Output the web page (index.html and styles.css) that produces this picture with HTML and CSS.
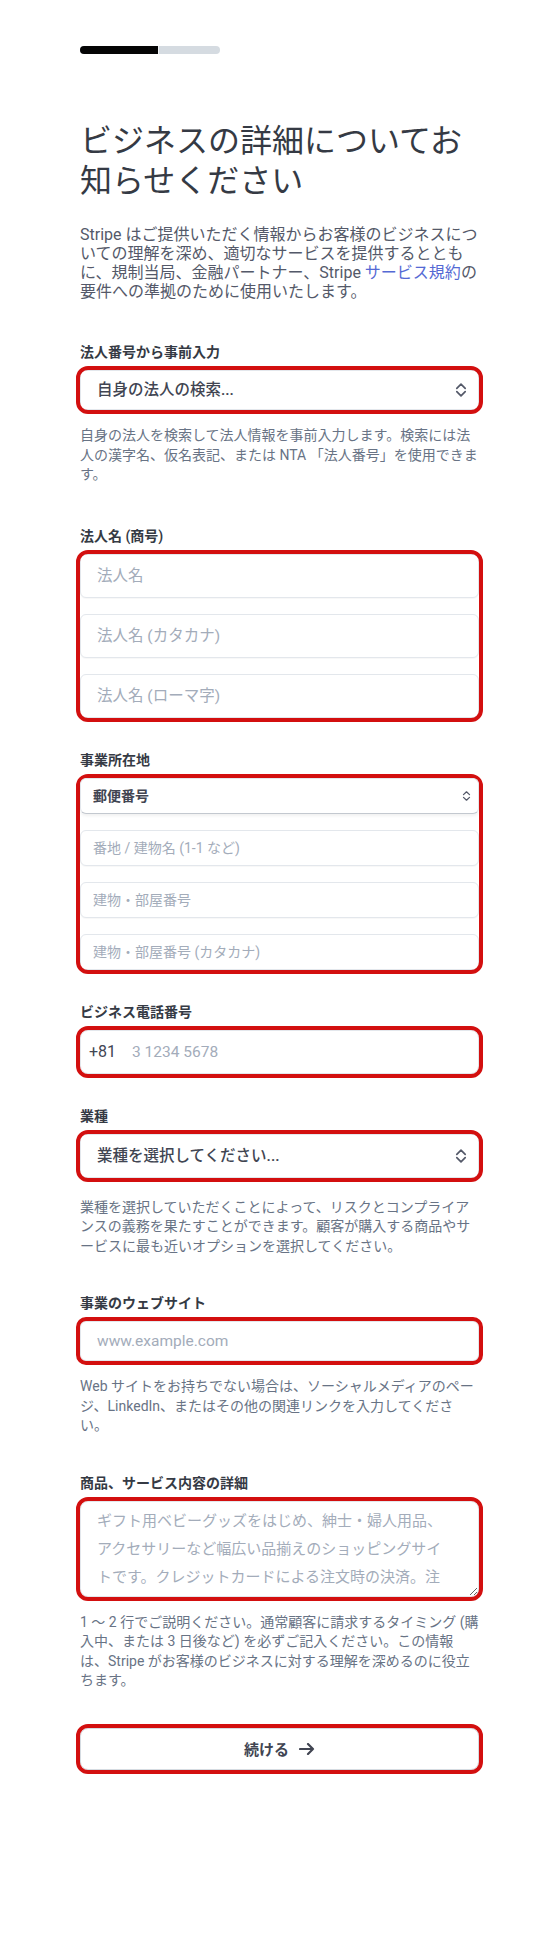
FILE: index.html
```html
<!DOCTYPE html>
<html lang="ja">
<head>
    <meta charset="UTF-8">
    <meta name="viewport" content="width=device-width, initial-scale=1.0">
    <title>ビジネスの詳細</title>
    <link rel="stylesheet" href="styles.css">
</head>
<body>
    <div class="page">
        <div class="progress"><div class="progress-fill"></div></div>

        <h1>ビジネスの詳細についてお知らせください</h1>
        <p class="intro">Stripe はご提供いただく情報からお客様のビジネスについての理解を深め、適切なサービスを提供するとともに、規制当局、金融パートナー、Stripe <a href="#">サービス規約</a>の要件への準拠のために使用いたします。</p>

        <form class="form" onsubmit="return false">
            <div class="field field-lookup">
                <label for="lookup">法人番号から事前入力</label>
                <div class="select-wrap hl">
                    <select id="lookup" class="select">
                        <option>自身の法人の検索...</option>
                    </select>
                    <svg class="chevron" viewBox="0 0 12 16"><path d="M1.8 6.4 6 2.2l4.2 4.2M1.8 9.6 6 13.8l4.2-4.2"/></svg>
                </div>
                <p class="hint">自身の法人を検索して法人情報を事前入力します。検索には法人の漢字名、仮名表記、または NTA 「法人番号」を使用できます。</p>
            </div>

            <div class="field">
                <label for="name">法人名 (商号)</label>
                <div class="stack hl">
                    <input id="name" class="input" type="text" placeholder="法人名">
                    <input class="input" type="text" placeholder="法人名 (カタカナ)">
                    <input class="input" type="text" placeholder="法人名 (ローマ字)">
                </div>
            </div>

            <div class="field">
                <label for="zip">事業所在地</label>
                <div class="stack hl">
                    <div class="select-wrap">
                        <select id="zip" class="select select-small">
                            <option>郵便番号</option>
                        </select>
                        <svg class="chevron chevron-small" viewBox="0 0 12 16"><path d="M2 6.2 6 2.4l4 3.8M2 9.8 6 13.6l4-3.8"/></svg>
                    </div>
                    <input class="input input-small" type="text" placeholder="番地 / 建物名 (1-1 など)">
                    <input class="input input-small" type="text" placeholder="建物・部屋番号">
                    <input class="input input-small" type="text" placeholder="建物・部屋番号 (カタカナ)">
                </div>
            </div>

            <div class="field">
                <label for="phone">ビジネス電話番号</label>
                <div class="phone hl">
                    <span class="phone-code">+81</span>
                    <input id="phone" type="tel" placeholder="3 1234 5678">
                </div>
            </div>

            <div class="field">
                <label for="industry">業種</label>
                <div class="select-wrap hl">
                    <select id="industry" class="select select-tall">
                        <option>業種を選択してください...</option>
                    </select>
                    <svg class="chevron" viewBox="0 0 12 16"><path d="M1.8 6.4 6 2.2l4.2 4.2M1.8 9.6 6 13.8l4.2-4.2"/></svg>
                </div>
                <p class="hint hint-loose">業種を選択していただくことによって、リスクとコンプライアンスの義務を果たすことができます。顧客が購入する商品やサービスに最も近いオプションを選択してください。</p>
            </div>

            <div class="field">
                <label for="website">事業のウェブサイト</label>
                <input id="website" class="input input-single hl" type="text" placeholder="www.example.com">
                <p class="hint">Web サイトをお持ちでない場合は、ソーシャルメディアのページ、LinkedIn、またはその他の関連リンクを入力してください。</p>
            </div>

            <div class="field">
                <label for="description">商品、サービス内容の詳細</label>
                <textarea id="description" class="textarea hl" placeholder="ギフト用ベビーグッズをはじめ、紳士・婦人用品、&#10;アクセサリーなど幅広い品揃えのショッピングサイ&#10;トです。クレジットカードによる注文時の決済。注&#10;文日または翌営業日後に発送いたします。"></textarea>
                <p class="hint">1 〜 2 行でご説明ください。通常顧客に請求するタイミング (購入中、または 3 日後など) を必ずご記入ください。この情報は、Stripe がお客様のビジネスに対する理解を深めるのに役立ちます。</p>
            </div>

            <button type="submit" class="submit hl">
                続ける
                <svg class="arrow" viewBox="0 0 16 12"><path d="M1 6h13M9 1l5 5-5 5"/></svg>
            </button>
        </form>
    </div>
</body>
</html>
```

FILE: styles.css
```css
* {
    box-sizing: border-box;
}
body {
    margin: 0;
    background: #fff;
    font-family: Roboto, "Noto Sans CJK JP", sans-serif;
    color: #353a44;
}
input, select, textarea, button {
    font-family: inherit;
}
.page {
    width: 399px;
    margin-left: 80px;
    padding: 46px 0 160px;
}
.progress {
    width: 140px;
    height: 8px;
    background: #d5dbe1;
    border-radius: 4px;
    overflow: hidden;
}
.progress-fill {
    width: 79px;
    height: 100%;
    background: #050505;
    border-right: 1px solid #f2f4f6;
}
h1 {
    margin: 67px 0 0;
    font-size: 32px;
    line-height: 40px;
    font-weight: 400;
    color: #353a44;
}
.intro {
    margin: 24px 0 0;
    font-size: 16px;
    line-height: 19px;
    color: #545969;
}
.intro a {
    display: inline-block;
    line-height: 19px;
    color: #5469d4;
    text-decoration: none;
}
.form {
    margin-top: 41px;
}
.field + .field {
    margin-top: 32px;
}
.field label {
    display: block;
    font-size: 14px;
    line-height: 20px;
    font-weight: 600;
    color: #353a44;
    margin-bottom: 8px;
}
.hint {
    margin: 16px 0 0;
    padding-bottom: 5px;
    font-size: 14px;
    line-height: 19.5px;
    color: #687385;
}
.field-lookup .hint {
    padding-bottom: 9px;
}
.hint-loose {
    margin-top: 20px;
}

/* red highlight boxes */
.hl {
    outline: 4px solid #d30f0f;
    border-radius: 8px;
}

.stack {
    display: flex;
    flex-direction: column;
    gap: 16px;
}
.input {
    display: block;
    width: 100%;
    height: 44px;
    padding: 0 16px;
    border: 1px solid #e3e7ec;
    border-radius: 6px;
    background: #fff;
    font-size: 15.5px;
    color: #353a44;
    box-shadow: 0 1px 1px rgba(0, 0, 0, 0.03);
}
.input-small {
    height: 36px;
    padding: 0 12px;
    font-size: 14px;
}
.input-single {
    height: 40px;
}
.input::placeholder, .phone input::placeholder, .textarea::placeholder {
    color: #a3acba;
    opacity: 1;
}

.select-wrap {
    position: relative;
}
.select {
    display: block;
    width: 100%;
    height: 40px;
    padding: 0 36px 0 16px;
    border: 1px solid #e3e7ec;
    border-radius: 6px;
    background: #fff;
    appearance: none;
    font-size: 15.5px;
    font-weight: 500;
    color: #414552;
    box-shadow: 0 1px 1px rgba(0, 0, 0, 0.06);
}
.select-tall {
    height: 44px;
}
.select-small {
    height: 36px;
    padding-left: 12px;
    font-size: 14px;
    font-weight: 600;
    border-bottom-color: #c3c8cf;
    box-shadow: 0 2px 3px rgba(0, 0, 0, 0.06);
}
.chevron {
    position: absolute;
    right: 12px;
    top: 50%;
    width: 12px;
    height: 16px;
    margin-top: -8px;
    fill: none;
    stroke: #545969;
    stroke-width: 1.7;
    stroke-linecap: round;
    stroke-linejoin: round;
}
.chevron-small {
    right: 8px;
    width: 9px;
    height: 12px;
    margin-top: -6px;
}

.phone {
    display: flex;
    align-items: center;
    height: 44px;
    border: 1px solid #e3e7ec;
    background: #fff;
}
.phone-code {
    padding: 0 0 0 8px;
    font-size: 16px;
    color: #414552;
}
.phone input {
    flex: 1;
    height: 100%;
    padding: 0 0 0 16px;
    border: 0;
    background: transparent;
    font-size: 15.5px;
    color: #353a44;
    outline: none;
}

.textarea {
    display: block;
    width: 100%;
    height: 96px;
    padding: 5px 16px;
    border: 1px solid #e3e7ec;
    background: #fff;
    font-size: 15px;
    line-height: 28px;
    color: #353a44;
    resize: vertical;
    overflow: hidden;
}

.submit {
    display: flex;
    align-items: center;
    justify-content: center;
    gap: 10px;
    width: 100%;
    height: 42px;
    margin-top: 32px;
    border: 1px solid #d5dbe1;
    background: #fff;
    font-size: 15px;
    font-weight: 600;
    color: #414552;
    cursor: pointer;
}
.arrow {
    width: 16px;
    height: 12px;
    fill: none;
    stroke: #414552;
    stroke-width: 2.2;
    stroke-linecap: round;
    stroke-linejoin: round;
}
```
